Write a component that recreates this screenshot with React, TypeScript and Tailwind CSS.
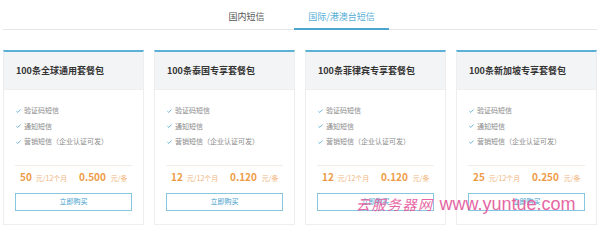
import React from "react";

const plans = [
  { name: "100条全球通用套餐包", price: "50", unit: "0.500" },
  { name: "100条泰国专享套餐包", price: "12", unit: "0.120" },
  { name: "100条菲律宾专享套餐包", price: "12", unit: "0.120" },
  { name: "100条新加坡专享套餐包", price: "25", unit: "0.250" },
];

const features = ["验证码短信", "通知短信", "营销短信（企业认证可发）"];

function Check() {
  return (
    <svg width="5" height="4" viewBox="0 0 5 4" className="shrink-0">
      <path d="M0.4 2.2 L1.8 3.4 L4.6 0.5" fill="none" stroke="#5aaed4" strokeWidth="0.9" />
    </svg>
  );
}

export default function App() {
  return (
    <div
      className="relative w-[600px] h-[236px] bg-white px-[3px] overflow-hidden"
      style={{ fontFamily: '"Noto Sans CJK SC", "Liberation Sans", sans-serif' }}
    >
      <div className="flex justify-center pr-[12px] h-[30px] border-b border-[#e6e6e6]">
        <div className="w-[95px] h-[30px] pt-[12px] text-center text-[9px] leading-[10px] text-[#555]">
          国内短信
        </div>
        <div className="w-[95px] h-[30px] pt-[12px] text-center text-[9px] leading-[10px] text-[#55aed6] border-b-2 border-[#4ba6cf]">
          国际/港澳台短信
        </div>
      </div>

      <div className="grid grid-cols-4 gap-[10px] mt-[20px]">
        {plans.map((p) => (
          <div
            key={p.name}
            className="border-t-2 border-t-[#5cb1d7] border-x border-b border-x-[#eeeeee] border-b-[#eeeeee] bg-white"
          >
            <div className="h-[38px] bg-[#f3f4f6] pl-[12px] flex items-center text-[9px] font-bold text-[#333] border-b border-[#efefef]">
              {p.name}
            </div>
            <div className="px-[11px] pt-[13px] pb-[13px]">
              <div className="flex flex-col">
                {features.map((f) => (
                  <div key={f} className="flex items-center gap-[3px] pl-[1px] h-[15.5px] text-[7px] leading-[15.5px] text-[#8a8a8a]">
                    <Check />
                    <span>{f}</span>
                  </div>
                ))}
              </div>
              <div className="mt-[15px] border-t border-[#f3ece6]" />
              <div className="flex items-center h-[12px] mt-[6px] pl-[5px]">
                <div className="w-[59px] flex items-baseline gap-[4px]">
                  <span className="text-[10px] font-bold text-[#ee9b48] leading-[12px]">{p.price}</span>
                  <span className="text-[7px] text-[#f1b57e] leading-[12px]">元/12个月</span>
                </div>
                <div className="flex items-baseline gap-[5px]">
                  <span className="text-[10px] font-bold text-[#ee9b48] leading-[12px]">{p.unit}</span>
                  <span className="text-[7px] text-[#f1b57e] leading-[12px]">元/条</span>
                </div>
              </div>
              <div className="mt-[9px] h-[18px] border border-[#86c6df] flex items-center justify-center text-[7px] text-[#3d9ccb]">
                立即购买
              </div>
            </div>
          </div>
        ))}
      </div>

      <div className="absolute left-[356px] top-[193px] flex items-center gap-[6px] pointer-events-none text-[#e4569a] opacity-90">
        <span className="text-[14px] tracking-[1.5px] italic leading-[22px]" style={{ fontFamily: '"Noto Sans CJK SC", serif' }}>
          云服务器网
        </span>
        <span className="text-[18px] leading-[22px]" style={{ fontFamily: '"Liberation Sans", sans-serif' }}>
          www.yuntue.com
        </span>
      </div>
    </div>
  );
}
